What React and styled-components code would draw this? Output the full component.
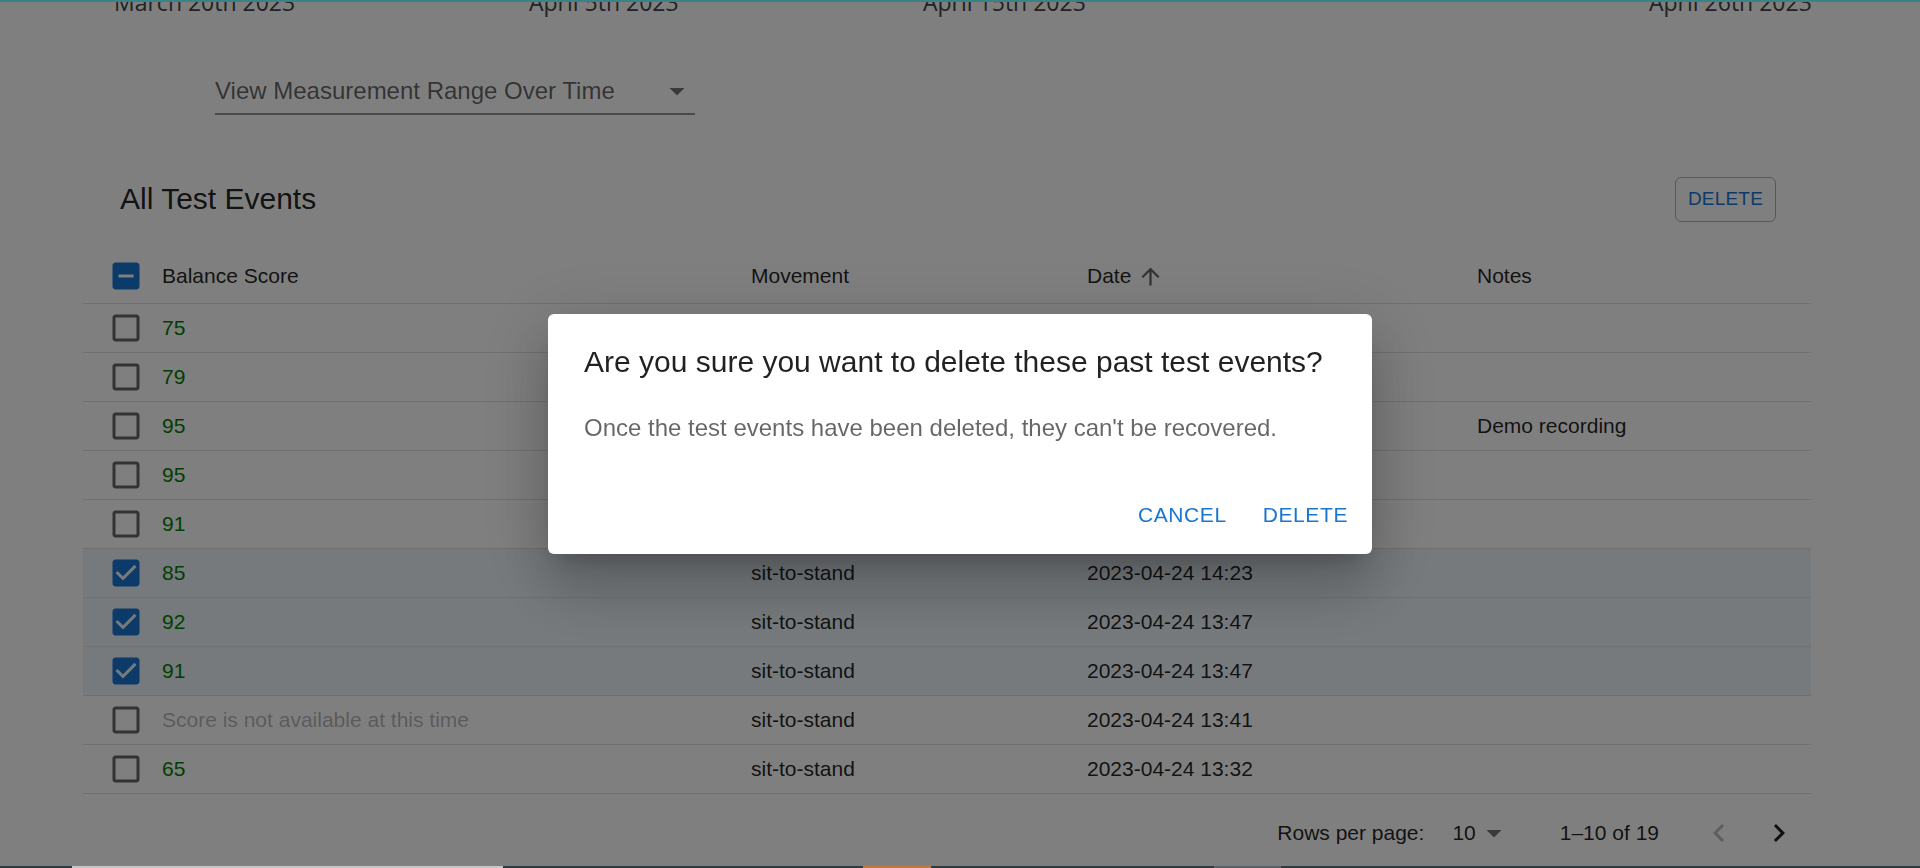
import React from 'react'
import styled, { createGlobalStyle } from 'styled-components'

const GlobalStyle = createGlobalStyle`
  html, body { margin: 0; padding: 0; background: #fff; }
  body { font-family: "Liberation Sans", Arial, sans-serif; color: rgba(0,0,0,0.87); }
  * { box-sizing: border-box; }
`

const axisLabels = [
  { text: 'March 20th 2023', x: 114 },
  { text: 'April 5th 2023', x: 529 },
  { text: 'April 15th 2023', x: 923 },
  { text: 'April 26th 2023', x: 1649 },
]

const rows = [
  { score: '75', movement: 'sit-to-stand', date: '2023-04-26 10:12', notes: '' },
  { score: '79', movement: 'sit-to-stand', date: '2023-04-26 10:05', notes: '' },
  { score: '95', movement: 'sit-to-stand', date: '2023-04-25 16:31', notes: 'Demo recording' },
  { score: '95', movement: 'sit-to-stand', date: '2023-04-25 09:44', notes: '' },
  { score: '91', movement: 'sit-to-stand', date: '2023-04-24 15:02', notes: '' },
  { score: '85', movement: 'sit-to-stand', date: '2023-04-24 14:23', notes: '', checked: true },
  { score: '92', movement: 'sit-to-stand', date: '2023-04-24 13:47', notes: '', checked: true },
  { score: '91', movement: 'sit-to-stand', date: '2023-04-24 13:47', notes: '', checked: true },
  { score: null, movement: 'sit-to-stand', date: '2023-04-24 13:41', notes: '' },
  { score: '65', movement: 'sit-to-stand', date: '2023-04-24 13:32', notes: '' },
]

const COLS = '79px 565px 336px 390px 358px'

const CheckIcon = ({ state }) => {
  if (state === 'checked') {
    return (
      <Svg viewBox="0 0 24 24" $size={36} $color="#1976d2">
        <path d="M19 3H5c-1.11 0-2 .9-2 2v14c0 1.1.89 2 2 2h14c1.11 0 2-.9 2-2V5c0-1.1-.89-2-2-2zm-9 14l-5-5 1.41-1.41L10 14.17l7.59-7.59L19 8l-9 9z" />
      </Svg>
    )
  }
  if (state === 'indeterminate') {
    return (
      <Svg viewBox="0 0 24 24" $size={36} $color="#1976d2">
        <path d="M19 3H5c-1.1 0-2 .9-2 2v14c0 1.1.9 2 2 2h14c1.1 0 2-.9 2-2V5c0-1.1-.9-2-2-2zm-2 10H7v-2h10v2z" />
      </Svg>
    )
  }
  return (
    <Svg viewBox="0 0 24 24" $size={36} $color="rgba(0,0,0,0.6)">
      <path d="M19 5v14H5V5h14m0-2H5c-1.11 0-2 .9-2 2v14c0 1.1.89 2 2 2h14c1.1 0 2-.9 2-2V5c0-1.1-.9-2-2-2z" />
    </Svg>
  )
}

const App = () => {
  return (
    <Page>
      <GlobalStyle />
      <TopStrip />

      <ChartAxis>
        {axisLabels.map(l => (
          <AxisLabel key={l.text} style={{ left: l.x }}>{l.text}</AxisLabel>
        ))}
      </ChartAxis>

      <RangeSelect>
        <span>View Measurement Range Over Time</span>
        <Svg viewBox="0 0 24 24" $size={36} $color="rgba(0,0,0,0.54)">
          <path d="M7 10l5 5 5-5z" />
        </Svg>
      </RangeSelect>

      <TableSection>
        <Toolbar>
          <Title>All Test Events</Title>
          <OutlinedButton>Delete</OutlinedButton>
        </Toolbar>

        <HeadRow>
          <CheckCell><CheckIcon state="indeterminate" /></CheckCell>
          <Cell $flush>Balance Score</Cell>
          <Cell>Movement</Cell>
          <Cell>
            Date
            <Svg viewBox="0 0 24 24" $size={27} $color="rgba(0,0,0,0.6)" style={{ marginLeft: 6 }}>
              <path d="M4 12l1.41 1.41L11 7.83V20h2V7.83l5.58 5.59L20 12l-8-8-8 8z" />
            </Svg>
          </Cell>
          <Cell>Notes</Cell>
        </HeadRow>

        {rows.map((r, i) => (
          <BodyRow key={i} $selected={r.checked}>
            <CheckCell><CheckIcon state={r.checked ? 'checked' : 'blank'} /></CheckCell>
            <Cell $flush>
              {r.score ? <Score>{r.score}</Score> : <Unavailable>Score is not available at this time</Unavailable>}
            </Cell>
            <Cell>{r.movement}</Cell>
            <Cell>{r.date}</Cell>
            <Cell>{r.notes}</Cell>
          </BodyRow>
        ))}

        <Pagination>
          <span>Rows per page:</span>
          <PageSizeSelect>
            <span>10</span>
            <Svg viewBox="0 0 24 24" $size={36} $color="rgba(0,0,0,0.54)">
              <path d="M7 10l5 5 5-5z" />
            </Svg>
          </PageSizeSelect>
          <span>1–10 of 19</span>
          <PageActions>
            <IconButton>
              <Svg viewBox="0 0 24 24" $size={36} $color="rgba(0,0,0,0.26)">
                <path d="M15.41 16.59L10.83 12l4.58-4.59L14 6l-6 6 6 6 1.41-1.41z" />
              </Svg>
            </IconButton>
            <IconButton>
              <Svg viewBox="0 0 24 24" $size={36} $color="rgba(0,0,0,0.87)">
                <path d="M8.59 16.59L13.17 12 8.59 7.41 10 6l6 6-6 6-1.41-1.41z" />
              </Svg>
            </IconButton>
          </PageActions>
        </Pagination>
      </TableSection>

      <Backdrop>
        <Dialog>
          <DialogTitle>Are you sure you want to delete these past test events?</DialogTitle>
          <DialogText>Once the test events have been deleted, they can't be recovered.</DialogText>
          <DialogActions>
            <TextButton>Cancel</TextButton>
            <TextButton>Delete</TextButton>
          </DialogActions>
        </Dialog>
      </Backdrop>

      <BottomStrip>
        <StripPart $w={72} $c="#2c3b3e" />
        <StripPart $w={431} $c="#c4c4c4" />
        <StripPart $w={360} $c="#2c3b3e" />
        <StripPart $w={68} $c="#c27a3c" />
        <StripPart $w={283} $c="#2c3b3e" />
        <StripPart $w={67} $c="#5c6266" />
        <StripPart $w={639} $c="#2c3b3e" />
      </BottomStrip>
    </Page>
  )
}

const Page = styled.div`
  width: 1920px; height: 868px; overflow: hidden; position: relative; background: #fff;
`

const Svg = styled.svg`
  width: ${p => p.$size}px; height: ${p => p.$size}px; fill: ${p => p.$color}; flex-shrink: 0; display: block;
`

const TopStrip = styled.div`
  position: absolute; top: 0; left: 0; right: 0; height: 2px; background: #3b8286; z-index: 1500;
`

const BottomStrip = styled.div`
  position: absolute; left: 0; right: 0; bottom: 0; height: 2px; display: flex; z-index: 1500;
`

const StripPart = styled.div`
  width: ${p => p.$w}px; height: 100%; background: ${p => p.$c};
`

const ChartAxis = styled.div`
  position: relative; height: 30px; margin-top: -13px;
`

const AxisLabel = styled.span`
  position: absolute; top: 0; font-family: "Open Sans", sans-serif; font-size: 23px; line-height: 30px; color: #444; white-space: nowrap;
`

const RangeSelect = styled.div`
  margin: 50px 0 0 215px; width: 480px; height: 48px; padding: 7px 0 0; display: flex; align-items: flex-start; justify-content: space-between;
  border-bottom: 2px solid rgba(0,0,0,0.42); font-size: 24px; line-height: 34px; color: rgba(0,0,0,0.6);
  svg { margin-top: -1px; }
`

const TableSection = styled.div`
  margin-left: 83px; width: 1728px;
`

const Toolbar = styled.div`
  margin: 51px 0 17px; height: 66px; padding: 0 35px 0 37px; display: flex; align-items: center; justify-content: space-between;
`

const Title = styled.h2`
  margin: 0; font-size: 30px; font-weight: 400; line-height: 48px; color: rgba(0,0,0,0.87);
`

const OutlinedButton = styled.button`
  font-family: inherit; font-size: 19px; line-height: 34px; letter-spacing: 0.01em; text-transform: uppercase;
  color: #1976d2; background: transparent; border: 1.5px solid rgba(25,118,210,0.5); border-radius: 6px; padding: 4.5px 12px; cursor: pointer;
`

const RowBase = styled.div`
  display: grid; grid-template-columns: ${COLS}; border-bottom: 1px solid #e0e0e0; font-size: 21px; color: rgba(0,0,0,0.87);
`

const HeadRow = styled(RowBase)`
  height: 55px; line-height: 36px;
`

const BodyRow = styled(RowBase)`
  height: 49px; line-height: 30px; background: ${p => p.$selected ? 'rgba(25,118,210,0.08)' : 'transparent'};
`

const CheckCell = styled.div`
  display: flex; align-items: center; padding-left: 25px;
`

const Cell = styled.div`
  display: flex; align-items: center; padding-left: ${p => p.$flush ? 0 : 24}px; white-space: nowrap;
`

const Score = styled.span`
  color: #008000;
`

const Unavailable = styled.span`
  color: rgba(0,0,0,0.3);
`

const Pagination = styled.div`
  height: 78px; display: flex; align-items: center; justify-content: flex-end; padding-right: 2px; font-size: 21px; color: rgba(0,0,0,0.87);
`

const PageSizeSelect = styled.div`
  display: flex; align-items: center; margin: 0 48px 0 28px;
`

const PageActions = styled.div`
  display: flex; margin-left: 30px;
`

const IconButton = styled.div`
  padding: 12px; display: flex;
`

const Backdrop = styled.div`
  position: fixed; inset: 0; background: rgba(0,0,0,0.5); display: flex; align-items: center; justify-content: center; z-index: 1300;
`

const Dialog = styled.div`
  width: 824px; background: #fff; border-radius: 6px;
  box-shadow: 0px 16px 22px -10px rgba(0,0,0,0.2), 0px 36px 57px 4px rgba(0,0,0,0.14), 0px 13px 69px 12px rgba(0,0,0,0.12);
`

const DialogTitle = styled.h2`
  margin: 0; padding: 24px 36px; font-size: 30px; font-weight: 400; line-height: 48px; color: rgba(0,0,0,0.87);
`

const DialogText = styled.p`
  margin: 0; padding: 0 36px 30px; font-size: 24px; line-height: 36px; color: rgba(0,0,0,0.6);
`

const DialogActions = styled.div`
  padding: 12px; display: flex; justify-content: flex-end; gap: 12px;
`

const TextButton = styled.button`
  font-family: inherit; font-size: 21px; line-height: 36.75px; letter-spacing: 0.02857em; text-transform: uppercase;
  min-width: 96px; padding: 9px 12px; color: #1976d2; background: transparent; border: 0; border-radius: 6px; cursor: pointer;
`

export default App
